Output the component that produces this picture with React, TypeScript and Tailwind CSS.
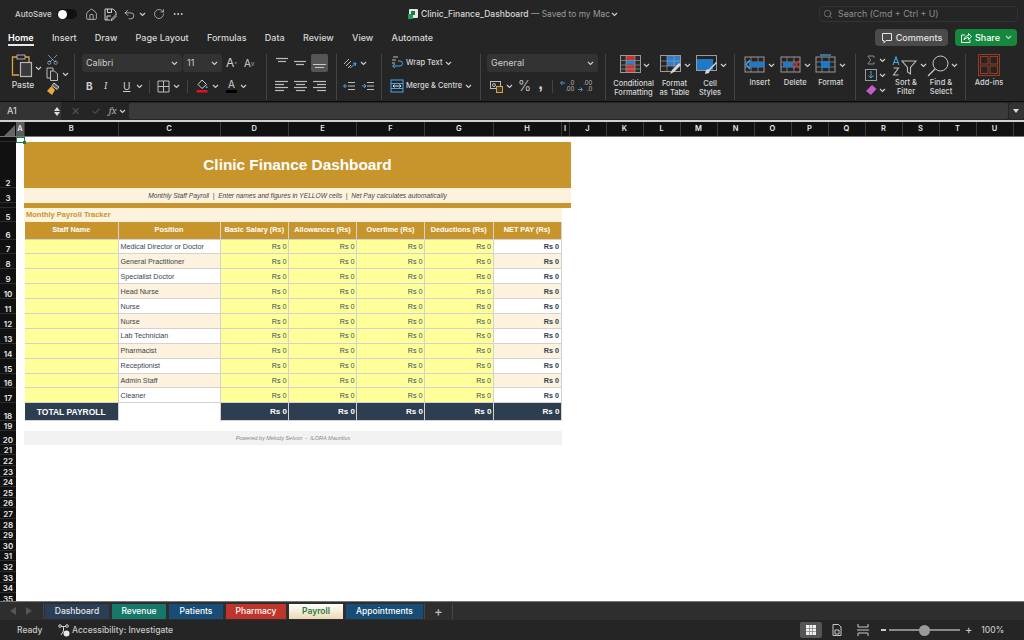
import React from "react";
import { Home, Undo2, RotateCw, MoreHorizontal, Search, Scissors, Sigma } from "lucide-react";

const Chev = ({ className = "" }: { className?: string }) => (
  <svg width="7" height="5" viewBox="0 0 7 5" fill="none" className={`shrink-0 ${className}`}>
    <path d="M1 1l2.5 2.5L6 1" stroke="#d0d0d0" strokeWidth="1.1" />
  </svg>
);

const Lines = ({ rows }: { rows: [number, number][] }) => (
  <svg width="14" height="12" viewBox="0 0 14 12" fill="none">
    {rows.map(([x1, x2], i) => (
      <path key={i} d={`M${x1} ${1.5 + i * 3}H${x2}`} stroke="#bdbdbd" strokeWidth="1.2" />
    ))}
  </svg>
);

const PasteIcon = () => (
  <svg width="24" height="24" viewBox="0 0 24 24" fill="none">
    <path d="M7 3H1.5v18H8" stroke="#e0a23c" strokeWidth="1.3" />
    <path d="M13 3h5v5" stroke="#e0a23c" strokeWidth="1.3" />
    <rect x="6" y="1" width="8" height="4" stroke="#b0b0b0" fill="#252525" />
    <rect x="9.5" y="8.5" width="11" height="14" stroke="#b8b8b8" strokeWidth="1.2" fill="#3a3a3a" />
  </svg>
);

const CopyIcon = () => (
  <svg width="13" height="14" viewBox="0 0 13 14" fill="none">
    <path d="M1 1h6v10H1z" stroke="#bdbdbd" />
    <path d="M4.5 4h4l3 3v6.5h-7z" stroke="#bdbdbd" fill="#2a2a2a" />
  </svg>
);

const BrushIcon = () => (
  <svg width="14" height="14" viewBox="0 0 14 14" fill="none">
    <path d="M8 1l5 4-2 2.5-5-4z" stroke="#c8c8c8" fill="#666" />
    <path d="M5.5 4L9 8 6 13 1 9z" fill="#e8a93c" />
  </svg>
);

const BordersIcon = () => (
  <svg width="13" height="13" viewBox="0 0 13 13" fill="none">
    <path d="M1 1h11v11H1zM6.5 1v11M1 6.5h11" stroke="#bdbdbd" />
  </svg>
);

const FillIcon = () => (
  <svg width="13" height="14" viewBox="0 0 13 14" fill="none">
    <path d="M6 1l4.500 4.500L6 9.500 2 5.500z" stroke="#d0d0d0" />
    <path d="M10.500 6.500l1.500 2.500h-2.500z" fill="#3d9be0" />
    <rect x="0.500" y="11" width="11" height="2.500" fill="#e0131a" />
  </svg>
);

const OrientIcon = () => (
  <svg width="14" height="13" viewBox="0 0 14 13" fill="none">
    <path d="M1 7l5-5M3 9l5-5M5 11l3-3" stroke="#bdbdbd" />
    <path d="M7 11l6-5M13 6l-3 .3M13 6l-1 3" stroke="#49a5e6" />
  </svg>
);

const IndentIcon = ({ flip = false }: { flip?: boolean }) => (
  <svg width="12" height="10" viewBox="0 0 12 10" fill="none">
    <path d="M5 1.500h7M5 5h7M5 8.500h7" stroke="#bdbdbd" />
    <path d={flip ? "M0 5h3M2 3l2 2-2 2" : "M4 5H1M2.500 3L.5 5l2 2"} stroke="#49a5e6" />
  </svg>
);

const WrapIcon = () => (
  <svg width="14" height="14" viewBox="0 0 14 14" fill="none">
    <path d="M3 1h5M2 4h4M2 7h3" stroke="#bdbdbd" />
    <path d="M3 10h7a2.500 2.500 0 0 0 0-5H8M5 8l-2.500 2L5 12" stroke="#49a5e6" />
  </svg>
);

const MergeIcon = () => (
  <svg width="14" height="14" viewBox="0 0 14 14" fill="none">
    <rect x="1" y="1" width="12" height="12" stroke="#49a5e6" />
    <path d="M1 4.500h12M1 9.500h12" stroke="#49a5e6" />
    <path d="M3 7h8M4.500 5.500L3 7l1.500 1.500M9.500 5.500L11 7 9.500 8.500" stroke="#cfe6f7" />
  </svg>
);

const CurrencyIcon = () => (
  <svg width="13" height="13" viewBox="0 0 13 13" fill="none">
    <rect x="0.500" y="1.500" width="10" height="7" stroke="#bdbdbd" />
    <circle cx="4" cy="5" r="1.500" stroke="#bdbdbd" />
    <rect x="6.500" y="6.500" width="6" height="6" fill="#3a3a3a" stroke="#e0a23c" />
  </svg>
);

const DecimalIcon = ({ more = false }: { more?: boolean }) => (
  <div className="flex w-[14px] items-center">
    <svg width="5" height="13" viewBox="0 0 5 13" fill="none" className="shrink-0">
      {more ? (
        <path d="M0 9.500h4M2.500 7.500l2 2-2 2" stroke="#49a5e6" strokeWidth=".9" />
      ) : (
        <path d="M5 3H1M2.500 1L.5 3l2 2" stroke="#49a5e6" strokeWidth=".9" />
      )}
    </svg>
    <div className="flex flex-col items-end text-[6px] leading-[6.500px] text-[#bdbdbd]">
      <span>{more ? ".00" : ".0"}</span>
      <span>{more ? ".0" : ".00"}</span>
    </div>
  </div>
);

const CondIcon = () => (
  <svg width="21" height="18" viewBox="0 0 21 18" fill="none">
    <rect x="0.500" y="0.500" width="20" height="17" stroke="#9a9a9a" fill="#2a2a2a" />
    <rect x="6" y="1" width="9" height="4" fill="#c9352b" />
    <rect x="6" y="5.500" width="9" height="4" fill="#2f7fd1" />
    <rect x="6" y="10" width="9" height="7" fill="#c9352b" />
    <path d="M6 1v16M15 1v16M1 5.500h19M1 10h19M1 14h19" stroke="#9a9a9a" strokeWidth=".7" />
  </svg>
);

const TableIcon = () => (
  <svg width="22" height="20" viewBox="0 0 22 20" fill="none">
    <rect x="0.500" y="0.500" width="20" height="16" stroke="#9a9a9a" />
    <rect x="7" y="1" width="13" height="5" fill="#2f7fd1" />
    <rect x="7" y="6" width="13" height="5" fill="#2f7fd1" />
    <path d="M7 1v16M14 1v16M1 6h19M1 11h19" stroke="#9a9a9a" strokeWidth=".7" />
    <path d="M19 8l-7 7-2 4 4-2 7-7z" fill="#d8d8d8" />
  </svg>
);

const StyleIcon = () => (
  <svg width="22" height="20" viewBox="0 0 22 20" fill="none">
    <rect x="0.500" y="0.500" width="20" height="15" stroke="#9a9a9a" />
    <rect x="1" y="4" width="16" height="11" fill="#1f78c8" />
    <path d="M20 7l-7 7-3 1-1 4 4-1 1-3 7-7z" fill="#d8d8d8" />
  </svg>
);

const CellOp = ({ kind }: { kind: "insert" | "delete" | "format" }) => (
  <svg width="22" height="20" viewBox="0 0 22 20" fill="none">
    <rect x="1" y="3" width="19" height="15" stroke="#9a9a9a" />
    <path d="M7 3v15M14 3v15M1 8h19M1 13h19" stroke="#9a9a9a" strokeWidth=".7" />
    {kind === "insert" && (
      <>
        <rect x="5" y="8" width="16" height="5" fill="#1f78c8" />
        <path d="M6 6l-4 4.500 4 4.500" stroke="#49a5e6" strokeWidth="1.300" />
      </>
    )}
    {kind === "delete" && (
      <>
        <rect x="3" y="8" width="10" height="5" fill="#1f78c8" />
        <path d="M13 6l7 9M20 6l-7 9" stroke="#d8403a" strokeWidth="1.200" />
      </>
    )}
    {kind === "format" && (
      <>
        <rect x="6" y="7" width="9" height="7" fill="#1f78c8" />
        <path d="M5 1h11" stroke="#49a5e6" strokeWidth="1.200" />
      </>
    )}
  </svg>
);

const SortIcon = () => (
  <svg width="27" height="20" viewBox="0 0 27 20" fill="none">
    <path d="M1 9l3-8 3 8M2 6.500h4" stroke="#49a5e6" strokeWidth="1.100" />
    <path d="M1.500 12h5l-5 7h5" stroke="#bdbdbd" strokeWidth="1.100" />
    <path d="M10 5h14l-5.500 6.500V18l-3-2v-4.500z" stroke="#bdbdbd" strokeWidth="1.100" />
  </svg>
);

const FindIcon = () => (
  <svg width="22" height="22" viewBox="0 0 22 22" fill="none">
    <circle cx="13.500" cy="8.500" r="7.500" stroke="#c8c8c8" />
    <path d="M8 14l-7 7" stroke="#c8c8c8" strokeWidth="1.200" />
  </svg>
);

const AddinIcon = () => (
  <svg width="22" height="22" viewBox="0 0 22 22" fill="none">
    <rect x="0.500" y="0.500" width="21" height="21" stroke="#9c3a24" />
    <rect x="2.500" y="2.500" width="7.500" height="7.500" stroke="#9c3a24" />
    <rect x="12" y="2.500" width="7.500" height="7.500" stroke="#9c3a24" />
    <rect x="2.500" y="12" width="7.500" height="7.500" stroke="#9c3a24" />
    <rect x="12" y="12" width="7.500" height="7.500" stroke="#9c3a24" />
  </svg>
);

const Sep = () => <div className="mt-[3px] h-[46px] w-px shrink-0 bg-[#444]" />;

const Caption = ({ children }: { children: React.ReactNode }) => (
  <div className="whitespace-nowrap text-center text-[7.500px] font-medium leading-[8.500px] text-[#d6d6d6]">{children}</div>
);

const TitleBar = () => (
  <div className="flex h-[27px] items-center whitespace-nowrap bg-[#252525] pt-[1px] text-[#cfcfcf]">
    <span className="ml-[15px] w-[36px] text-[8px] font-medium">AutoSave</span>
    <div className="ml-[6px] flex h-[10px] w-[20px] items-center rounded-full bg-[#111] pl-[1px]">
      <div className="h-[9px] w-[9px] rounded-full bg-white" />
    </div>
    <Home size={13} strokeWidth={1.4} className="ml-[8px]" />
    <svg width="13" height="13" viewBox="0 0 13 13" fill="none" className="ml-[6px]">
      <path d="M1 1h8l3 3v3M1 1v11h5M3.500 1v3.500h4V1M3 12V8h4" stroke="#cfcfcf" />
      <path d="M12 6.500L7.500 11 7 12.500l1.500-.5L13 7.500" stroke="#cfcfcf" />
    </svg>
    <Undo2 size={13} strokeWidth={1.4} className="ml-[6px]" />
    <Chev className="ml-[3px]" />
    <RotateCw size={12} strokeWidth={1.4} className="ml-[7px]" />
    <MoreHorizontal size={12} className="ml-[7px]" />
    <svg width="10" height="10" viewBox="0 0 10 10" className="ml-[224px]">
      <rect x="1" y="0" width="9" height="9" rx="1" fill="#e8e8e8" />
      <rect x="0" y="5" width="5" height="5" fill="#1f9d55" />
      <rect x="3" y="2" width="4" height="4" fill="#1e7a45" />
    </svg>
    <span className="ml-[3px] w-[108px] text-[8.500px] font-medium text-[#d8d8d8]">Clinic_Finance_Dashboard</span>
    <span className="ml-[2px] w-[78px] text-[8.400px] text-[#9a9a9a]">— Saved to my Mac</span>
    <Chev className="ml-[2px]" />
    <div className="ml-[201px] flex h-[16px] w-[199px] items-center rounded-[4px] border border-[#333] pl-[3px] text-[8.800px] text-[#8d8d8d]">
      <Search size={10} strokeWidth={1.5} />
      <span className="ml-[5px]">Search (Cmd + Ctrl + U)</span>
    </div>
  </div>
);

const tabs = ["Home", "Insert", "Draw", "Page Layout", "Formulas", "Data", "Review", "View", "Automate"];

const TabBar = () => (
  <div className="flex h-[21px] items-center bg-[#252525] pl-[8px]">
    <div className="flex w-[860px] items-center gap-[18.250px]">
      {tabs.map((t, i) => (
        <div key={t} className="relative flex h-[13px] items-center">
          <span className={`text-[9px] font-medium leading-[13px] ${i === 0 ? "text-white font-semibold" : "text-[#d6d6d6]"}`}>{t}</span>
          {i === 0 && <div className="absolute -bottom-[2px] left-0 right-0 h-[2px] bg-[#e8e8e8]" />}
        </div>
      ))}
    </div>
    <div className="ml-[7px] flex h-[17px] w-[73px] items-center justify-center gap-[3px] rounded-[4px] bg-[#4a4a4a] text-[9px] font-medium text-[#e6e6e6]">
      <svg width="12" height="12" viewBox="0 0 12 12" fill="none">
        <path d="M1.500 1.500h9v7H5L3 11V8.500H1.500z" stroke="#e6e6e6" />
      </svg>
      Comments
    </div>
    <div className="ml-[7px] flex h-[17px] w-[62px] items-center justify-center gap-[3px] rounded-[4px] bg-[#15883e] text-[9px] font-medium text-white">
      <svg width="12" height="12" viewBox="0 0 12 12" fill="none">
        <path d="M10 7.500v3H1.500V3H5M4 8c.5-3 2.500-4.500 4.500-4.500V1.500L11.500 4.500 8.500 7.500V5.500C6.500 5.500 5 6.500 4 8z" stroke="#fff" strokeWidth=".9" />
      </svg>
      Share
      <Chev className="ml-[2px]" />
    </div>
  </div>
);

const Ribbon = () => (
  <div className="flex h-[54px] border-b border-[#0d0d0d] bg-[#252525] pt-[3px] text-[#d0d0d0]">
    {/* clipboard */}
    <div className="flex w-[74px] shrink-0">
      <div className="ml-[11px] flex w-[24px] flex-col items-center pt-[3px]">
        <PasteIcon />
        <div className="mt-[1px] text-[8.500px] font-medium text-[#d6d6d6]">Paste</div>
      </div>
      <Chev className="mt-[15px]" />
      <div className="ml-[4px] flex flex-col gap-[1px]">
        <Scissors size={13} strokeWidth={1.2} className="mt-[2px] -rotate-90 text-[#9dc7ec]" />
        <div className="flex items-center gap-[3px]">
          <CopyIcon />
          <Chev />
        </div>
        <BrushIcon />
      </div>
    </div>
    <Sep />
    {/* font */}
    <div className="flex w-[191px] shrink-0 flex-col pl-[7px] pt-[3px]">
      <div className="flex items-center">
        <div className="flex h-[18px] w-[100px] items-center justify-between rounded-[3px] bg-[#333] px-[4px] text-[9px]">
          Calibri
          <Chev />
        </div>
        <div className="ml-[1px] flex h-[18px] w-[39px] items-center justify-between rounded-[3px] bg-[#333] px-[4px] text-[9px]">
          11
          <Chev />
        </div>
        <span className="ml-[4px] text-[12px]">A</span>
        <span className="text-[6px] text-[#7fbce8]">^</span>
        <span className="ml-[7px] text-[10px]">A</span>
        <span className="text-[6px] text-[#7fbce8]">v</span>
      </div>
      <div className="mt-[5px] flex h-[18px] items-center text-[10px]">
        <span className="ml-[4px] w-[18px] font-bold">B</span>
        <span className="w-[19px] font-serif italic">I</span>
        <span className="w-[13px] underline">U</span>
        <Chev />
        <div className="ml-[6px] h-[13px] w-px bg-[#444]" />
        <div className="ml-[7px]"><BordersIcon /></div>
        <Chev className="ml-[3px]" />
        <div className="ml-[7px] h-[13px] w-px bg-[#444]" />
        <div className="ml-[8px]"><FillIcon /></div>
        <Chev className="ml-[3px]" />
        <div className="ml-[7px] flex w-[11px] flex-col items-center">
          <span className="text-[10px] leading-[11px]">A</span>
          <div className="h-[3px] w-[11px] bg-black" />
        </div>
        <Chev className="ml-[3px]" />
      </div>
    </div>
    <Sep />
    {/* alignment */}
    <div className="flex w-[114px] shrink-0 pl-[8px] pt-[3px]">
      <div className="flex w-[60px] flex-col">
        <div className="flex h-[18px] items-center gap-[4px]">
          <Lines rows={[[1, 13], [3, 11], [-1, -1]]} />
          <Lines rows={[[-1, -1], [1, 13], [3, 11]]} />
          <div className="flex h-[18px] w-[17px] items-center justify-center rounded-[2px] bg-[#555]">
            <svg width="13" height="11" viewBox="0 0 13 11" fill="none">
              <path d="M0 6.500h13M2 9.500h9" stroke="#c8c8c8" strokeWidth="1.200" />
            </svg>
          </div>
        </div>
        <div className="mt-[5px] flex h-[18px] items-center gap-[5px]">
          <Lines rows={[[0, 13], [0, 9], [0, 13], [0, 9]]} />
          <Lines rows={[[0, 13], [2, 11], [0, 13], [2, 11]]} />
          <Lines rows={[[0, 13], [4, 13], [0, 13], [4, 13]]} />
        </div>
      </div>
      <div className="ml-[1px] h-[46px] w-px bg-[#444]" />
      <div className="ml-[6px] flex flex-col">
        <div className="flex h-[18px] items-center gap-[3px]">
          <OrientIcon />
          <Chev />
        </div>
        <div className="mt-[5px] flex h-[18px] items-center gap-[7px]">
          <IndentIcon />
          <IndentIcon flip />
        </div>
      </div>
    </div>
    <Sep />
    {/* wrap and merge */}
    <div className="flex w-[98px] shrink-0 flex-col whitespace-nowrap pl-[8px] pt-[3px] text-[7.500px] font-medium text-[#d6d6d6]">
      <div className="flex h-[18px] items-center">
        <WrapIcon />
        <span className="ml-[2px]">Wrap Text</span>
        <Chev className="ml-[3px]" />
      </div>
      <div className="mt-[5px] flex h-[18px] items-center">
        <MergeIcon />
        <span className="ml-[2px]">Merge &amp; Centre</span>
        <Chev className="ml-[3px]" />
      </div>
    </div>
    <Sep />
    {/* number */}
    <div className="flex w-[124px] shrink-0 flex-col pl-[6px] pt-[3px]">
      <div className="flex h-[18px] w-[111px] items-center justify-between rounded-[3px] bg-[#333] px-[4px] text-[9px]">
        General
        <Chev />
      </div>
      <div className="mt-[5px] flex h-[18px] items-center">
        <div className="ml-[3px]"><CurrencyIcon /></div>
        <Chev className="ml-[3px]" />
        <span className="ml-[5px] text-[14px] font-light leading-none">%</span>
        <span className="ml-[7px] -mt-[6px] w-[8px] font-['Liberation_Sans'] text-[17px] font-bold leading-none">,</span>
        <div className="ml-[6px] h-[13px] w-px bg-[#444]" />
        <div className="ml-[7px]"><DecimalIcon /></div>
        <div className="ml-[4px]"><DecimalIcon more /></div>
      </div>
    </div>
    <Sep />
    {/* styles */}
    <div className="flex w-[128px] shrink-0 pl-[7px] pt-[4px]">
      <div className="flex w-[41px] flex-col items-center">
        <div className="flex h-[22px] items-start gap-[2px] self-start pl-[7px]"><CondIcon /><Chev className="mt-[8px]" /></div>
        <div className="mt-[3px]"><Caption>Conditional<br />Formatting</Caption></div>
      </div>
      <div className="flex w-[41px] flex-col items-center">
        <div className="flex h-[22px] items-start gap-[2px] self-start pl-[6px]"><TableIcon /><Chev className="mt-[8px]" /></div>
        <div className="mt-[3px]"><Caption>Format<br />as Table</Caption></div>
      </div>
      <div className="flex w-[30px] flex-col items-center">
        <div className="flex h-[22px] items-start gap-[2px] self-start pl-[1px]"><StyleIcon /><Chev className="mt-[8px]" /></div>
        <div className="mt-[3px]"><Caption>Cell<br />Styles</Caption></div>
      </div>
    </div>
    <Sep />
    {/* cells */}
    <div className="flex w-[120px] shrink-0 pl-[7px] pt-[3px]">
      {(["insert", "delete", "format"] as const).map((k) => (
        <div key={k} className="flex w-[35.500px] flex-col items-center">
          <div className="flex h-[23px] items-start gap-[2px]">
            <CellOp kind={k} />
            <Chev className="mt-[9px]" />
          </div>
          <div className="mt-[2px]"><Caption>{k === "insert" ? "Insert" : k === "delete" ? "Delete" : "Format"}</Caption></div>
        </div>
      ))}
    </div>
    <Sep />
    {/* editing */}
    <div className="flex w-[109px] shrink-0 pl-[9px] pt-[3px]">
      <div className="flex w-[27px] shrink-0 flex-col gap-[3px]">
        <div className="flex items-center gap-[2px]"><Sigma size={12} strokeWidth={1.2} /><Chev /></div>
        <div className="flex items-center gap-[2px]">
          <svg width="12" height="12" viewBox="0 0 12 12" fill="none">
            <rect x="0.500" y="0.500" width="11" height="11" stroke="#9a9a9a" />
            <path d="M6 2v7M3.500 6.500L6 9l2.500-2.500" stroke="#49a5e6" />
          </svg>
          <Chev />
        </div>
        <div className="flex items-center gap-[2px]">
          <svg width="12" height="12" viewBox="0 0 12 12" fill="none">
            <path d="M7 1l4.500 4L6 11 1 7z" fill="#c85ac8" />
          </svg>
          <Chev />
        </div>
      </div>
      <div className="flex w-[28px] shrink-0 flex-col items-center">
        <div className="flex h-[23px] items-center gap-[1px] self-start"><SortIcon /><Chev /></div>
        <div className="mt-[2px]"><Caption>Sort &amp;<br />Filter</Caption></div>
      </div>
      <div className="flex w-[42px] shrink-0 flex-col items-center">
        <div className="flex h-[23px] items-center gap-[2px] self-start pl-[7px]"><FindIcon /><Chev /></div>
        <div className="mt-[2px]"><Caption>Find &amp;<br />Select</Caption></div>
      </div>
    </div>
    <Sep />
    <div className="flex w-[46px] shrink-0 flex-col items-center pt-[3px]">
      <AddinIcon />
      <div className="mt-[3px]"><Caption>Add-ins</Caption></div>
    </div>
  </div>
);

const FormulaBar = () => (
  <div className="flex h-[20px] items-start border-b-2 border-[#cfcfcf] bg-[#252525] text-[#cfcfcf]">
    <div className="flex h-[18px] w-[61px] items-center justify-between bg-[#333] pl-[7px] pr-[1px] text-[9px] font-medium">
      A1
      <div className="flex flex-col gap-[1px]">
        <div className="h-0 w-0 border-x-[3px] border-b-[4px] border-x-transparent border-b-[#ddd]" />
        <div className="h-0 w-0 border-x-[3px] border-t-[4px] border-x-transparent border-t-[#ddd]" />
      </div>
    </div>
    <span className="ml-[10px] text-[11px] leading-[18px] text-[#555]">✕</span>
    <span className="ml-[11px] text-[11px] leading-[18px] text-[#555]">✓</span>
    <span className="ml-[8px] font-serif text-[11px] italic leading-[18px] text-[#aaa]">fx</span>
    <Chev className="ml-[2px] mt-[7px]" />
    <div className="ml-[3px] mt-[1px] h-[16px] w-[879px] rounded-[2px] bg-[#3a3a3a]" />
    <div className="ml-[1px] mt-[1px] flex h-[16px] flex-1 items-center justify-center rounded-[2px] bg-[#333]">
      <div className="h-0 w-0 border-x-[3px] border-t-[4px] border-x-transparent border-t-[#ddd]" />
    </div>
  </div>
);

const columns: [string, string][] = [
  ["A", "w-[9px]"], ["B", "w-[93.500px]"], ["C", "w-[102px]"], ["D", "w-[68.500px]"], ["E", "w-[68px]"],
  ["F", "w-[68px]"], ["G", "w-[68.500px]"], ["H", "w-[68px]"], ["I", "w-[8px]"], ["J", "w-[37px]"],
  ["K", "w-[37px]"], ["L", "w-[37px]"], ["M", "w-[37px]"], ["N", "w-[37px]"], ["O", "w-[37px]"],
  ["P", "w-[37px]"], ["Q", "w-[37px]"], ["R", "w-[37px]"], ["S", "w-[37px]"], ["T", "w-[37px]"], ["U", "w-[37px]"],
];

const ColumnHeader = () => (
  <div className="flex h-[15px] border-b border-[#777] bg-[#111]">
    <div className="flex h-[14px] w-[16px] shrink-0 items-end justify-end pr-[1px]">
      <div className="h-0 w-0 border-b-[11px] border-l-[11px] border-b-[#666] border-l-transparent" />
    </div>
    {columns.map(([c, w]) => (
      <div
        key={c}
        className={`flex shrink-0 items-center justify-center border-r border-[#3a3a3a] text-[7.500px] font-semibold text-[#e8e8e8] ${w} ${c === "A" ? "bg-[#5c5c5c]" : ""}`}
      >
        {c}
      </div>
    ))}
  </div>
);

const rowHeights: [number, string][] = [
  [1, "h-[5px]"], [2, "h-[46px]"], [3, "h-[15px]"], [4, "h-[5px]"], [5, "h-[14px]"], [6, "h-[17.500px]"],
  [7, "h-[14.900px]"], [8, "h-[14.900px]"], [9, "h-[14.900px]"], [10, "h-[14.900px]"], [11, "h-[14.900px]"],
  [12, "h-[14.900px]"], [13, "h-[14.900px]"], [14, "h-[14.900px]"], [15, "h-[14.900px]"], [16, "h-[14.900px]"],
  [17, "h-[14.900px]"], [18, "h-[18px]"], [19, "h-[10px]"], [20, "h-[13.500px]"], [21, "h-[10.600px]"],
  [22, "h-[10.600px]"], [23, "h-[10.600px]"], [24, "h-[10.600px]"], [25, "h-[10.600px]"], [26, "h-[10.600px]"],
  [27, "h-[10.600px]"], [28, "h-[10.600px]"], [29, "h-[10.600px]"], [30, "h-[10.600px]"], [31, "h-[10.600px]"],
  [32, "h-[10.600px]"], [33, "h-[10.600px]"], [34, "h-[10.600px]"], [35, "h-[10.600px]"],
];

const RowHeader = () => (
  <div className="w-[16px] shrink-0 bg-[#111]">
    {rowHeights.map(([r, h]) => (
      <div
        key={r}
        className={`flex items-end justify-center overflow-hidden border-b border-[#2c2c2c] text-[8px] font-semibold leading-[7px] text-[#e8e8e8] ${h}`}
      >
        {r > 1 && r !== 4 ? r : ""}
      </div>
    ))}
  </div>
);

const staff = [
  "Medical Director or Doctor", "General Practitioner", "Specialist Doctor", "Head Nurse", "Nurse", "Nurse",
  "Lab Technician", "Pharmacist", "Receptionist", "Admin Staff", "Cleaner",
];
const headers = ["Staff Name", "Position", "Basic Salary (Rs)", "Allowances (Rs)", "Overtime (Rs)", "Deductions (Rs)", "NET PAY (Rs)"];

const cellBorder = "border-r border-b border-[#d2d2d2]";

const PayrollTable = () => (
  <div className="ml-[1px] grid w-[537px] grid-cols-[93.500px_102px_68.500px_68px_68px_68.500px_68px]">
    {headers.map((h) => (
      <div key={h} className={`flex h-[17.500px] items-center justify-center bg-[#c8952c] pt-[1px] text-[7.300px] font-bold text-white ${cellBorder}`}>
        {h}
      </div>
    ))}
    {staff.map((p, i) => {
      const stripe = i % 2 === 0 ? "bg-white" : "bg-[#fdf2dd]";
      return (
        <React.Fragment key={i}>
          <div className={`h-[14.900px] bg-[#ffff99] ${cellBorder}`} />
          <div className={`flex h-[14.900px] items-center pl-[2px] pt-[2px] text-[7.200px] text-[#3a4450] ${stripe} ${cellBorder}`}>{p}</div>
          {[0, 1, 2, 3].map((n) => (
            <div key={n} className={`flex h-[14.900px] items-center justify-end bg-[#ffff99] pr-[1.500px] pt-[2px] text-[7.200px] text-[#2f4f5f] ${cellBorder}`}>
              Rs 0
            </div>
          ))}
          <div className={`flex h-[14.900px] items-center justify-end pr-[1.500px] pt-[2px] text-[7.200px] font-bold text-[#2c3e50] ${stripe} ${cellBorder}`}>
            Rs 0
          </div>
        </React.Fragment>
      );
    })}
    <div className={`flex h-[18px] items-center justify-center bg-[#2c3e50] pt-[1px] text-[8.500px] font-bold text-white ${cellBorder}`}>TOTAL PAYROLL</div>
    <div className="h-[18px] border-r border-[#d2d2d2] bg-white" />
    {[0, 1, 2, 3, 4].map((n) => (
      <div key={n} className={`flex h-[18px] items-center justify-end bg-[#2c3e50] pr-[1px] pt-[1px] text-[8px] font-bold text-white ${cellBorder}`}>
        Rs 0
      </div>
    ))}
  </div>
);

const Sheet = () => (
  <div className="flex h-[464px] overflow-hidden bg-white">
    <RowHeader />
    <div className="relative flex-1 pl-[8px] pt-[5px] font-['Liberation_Sans',Arial,sans-serif]">
      {/* A1 selection */}
      <div className="absolute left-0 top-0 h-[6px] w-[9px] border border-[#1e7a45]">
        <div className="absolute -bottom-[2px] -right-[2px] h-[3px] w-[3px] bg-[#1e7a45]" />
      </div>
      <div className="flex h-[46px] w-[547px] items-center justify-center bg-[#c8952c] text-[15.350px] font-bold text-white">
        Clinic Finance Dashboard
      </div>
      <div className="flex h-[15px] w-[547px] items-center justify-center bg-[#fdf2dd] text-[6.650px] italic text-[#444]">
        Monthly Staff Payroll&nbsp; |&nbsp; Enter names and figures in YELLOW cells&nbsp; |&nbsp; Net Pay calculates automatically
      </div>
      <div className="h-[5px] w-[547px] bg-[#c8952c]" />
      <div className="flex h-[14px] w-[538px] items-center bg-[#fdf2dd] pl-[2px] text-[7.500px] font-bold text-[#c8952c]">
        Monthly Payroll Tracker
      </div>
      <PayrollTable />
      <div className="h-[10px]" />
      <div className="flex h-[13.500px] w-[538px] items-center justify-center bg-[#f2f2f2] text-[5.500px] italic text-[#888]">
        Powered by Melody Selvon&nbsp; -&nbsp; ILORA Mauritius
      </div>
    </div>
  </div>
);

const sheetTabs = [
  { n: "Dashboard", w: "w-[64px]", c: "bg-[#2a3f55] text-[#e8e8e8]" },
  { n: "Revenue", w: "w-[54px]", c: "bg-[#16786a] text-white" },
  { n: "Patients", w: "w-[54px]", c: "bg-[#174d76] text-white" },
  { n: "Pharmacy", w: "w-[60px]", c: "bg-[#c0352b] text-white" },
  { n: "Payroll", w: "w-[54px]", c: "bg-gradient-to-b from-white to-[#ead8b4] text-[#1f7a3e] font-semibold" },
  { n: "Appointments", w: "w-[77px]", c: "bg-[#174d76] text-white" },
];

const SheetTabs = () => (
  <div className="flex h-[19px] items-center border-t border-[#777] bg-[#2e2e2e]">
    <div className="ml-[10px] h-0 w-0 border-y-[4px] border-r-[6px] border-y-transparent border-r-[#555]" />
    <div className="ml-[10px] h-0 w-0 border-y-[4px] border-l-[6px] border-y-transparent border-l-[#555]" />
    <div className="ml-[11px] h-[16px] w-px bg-[#444]" />
    <div className="ml-[1px] flex items-center gap-[3px]">
      {sheetTabs.map((t) => (
        <div key={t.n} className={`flex h-[15px] items-center justify-center text-[8.500px] font-medium ${t.w} ${t.c}`}>
          {t.n}
        </div>
      ))}
    </div>
    <div className="ml-[1px] h-[16px] w-px bg-[#444]" />
    <span className="ml-[9px] text-[13px] font-medium leading-none text-[#bbb]">+</span>
    <div className="ml-[9px] h-[16px] w-px bg-[#444]" />
  </div>
);

const StatusBar = () => (
  <div className="flex h-[20px] items-center whitespace-nowrap bg-[#252525] text-[8.500px] font-medium text-[#c8c8c8]">
    <span className="ml-[17px] w-[25px]">Ready</span>
    <svg width="12" height="13" viewBox="0 0 12 13" fill="none" className="ml-[16px]">
      <circle cx="2" cy="2" r="1.300" stroke="#d0d0d0" />
      <circle cx="9" cy="2" r="1.300" stroke="#d0d0d0" />
      <path d="M3 2.500h5M5.500 3v4L3 11" stroke="#d0d0d0" />
      <circle cx="8.500" cy="9.500" r="3" fill="#e8e8e8" />
    </svg>
    <span className="ml-[2px] w-[100px]">Accessibility: Investigate</span>
    <div className="ml-[628px] flex h-[16px] w-[22px] items-center justify-center rounded-[2px] bg-[#555]">
      <svg width="10" height="10" viewBox="0 0 10 10" fill="#f0f0f0">
        <path d="M0 0h3v3H0zM3.500 0h3v3h-3zM7 0h3v3H7zM0 3.500h3v3H0zM3.500 3.500h3v3h-3zM7 3.500h3v3H7zM0 7h3v3H0zM3.500 7h3v3h-3zM7 7h3v3H7z" />
      </svg>
    </div>
    <svg width="10" height="12" viewBox="0 0 10 12" fill="none" className="ml-[10px]">
      <path d="M1 .500h5.500L9 3v8.500H1z" stroke="#c8c8c8" />
      <path d="M3 6h4v4H3z" stroke="#c8c8c8" />
    </svg>
    <svg width="12" height="12" viewBox="0 0 12 12" fill="none" className="ml-[15px]">
      <path d="M1 0v3h10V0M1 12V9h10v3M0 6h12" stroke="#c8c8c8" />
    </svg>
    <div className="ml-[12px] h-[1.500px] w-[5px] bg-[#c8c8c8]" />
    <div className="ml-[3px] flex h-[2px] w-[71px] items-center bg-[#8a8a8a] pl-[30px]">
      <div className="h-[11px] w-[11px] shrink-0 rounded-full bg-[#9a9a9a]" />
    </div>
    <span className="ml-[5px] text-[11px] leading-none">+</span>
    <span className="ml-[9px]">100%</span>
  </div>
);

export default function App() {
  return (
    <div className="h-[640px] w-[1024px] overflow-hidden bg-[#252525] font-['Inter','Liberation_Sans',sans-serif]">
      <TitleBar />
      <TabBar />
      <Ribbon />
      <FormulaBar />
      <ColumnHeader />
      <Sheet />
      <SheetTabs />
      <StatusBar />
    </div>
  );
}
